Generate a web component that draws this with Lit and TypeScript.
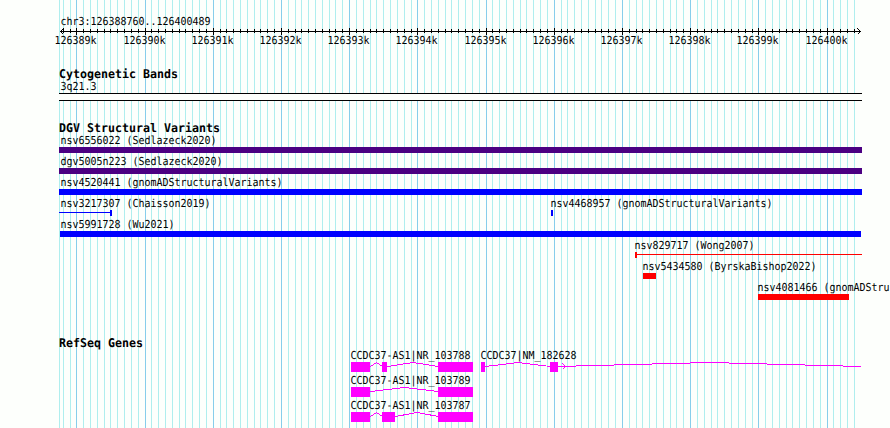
import { LitElement, html, svg, css, nothing } from "lit";
import { customElement } from "lit/decorators.js";
import { map } from "lit/directives/map.js";

type Point = [number, number];

interface Feature {
  label: string;
  x: number;
  color?: string;
  blocks: [number, number][];
  line?: [number, number];
  introns?: [number, number][];
  arrow?: number;
}

const WIDTH = 890;
const LEFT = 59;
const RIGHT = 862;
const FIRST_KB = 126389;
const KB_ORIGIN = 76.82;
const TICK_STEP = 6.82;

const PURPLE = "#4b0082";
const BLUE = "#0000ff";
const RED = "#ff0000";
const MAGENTA = "#ff00ff";

// tick -2 is the first one inside the panel, every tenth is a full kb
const ticks = Array.from({ length: 117 }, (_, i) => {
  const n = i - 2;
  return { x: Math.floor(KB_ORIGIN + n * TICK_STEP), n, major: n % 10 === 0 };
});

const variants: Feature[][] = [
  [{ label: "nsv6556022 (Sedlazeck2020)", x: 60, color: PURPLE, blocks: [[59, 862]] }],
  [{ label: "dgv5005n223 (Sedlazeck2020)", x: 60, color: PURPLE, blocks: [[59, 862]] }],
  [{ label: "nsv4520441 (gnomADStructuralVariants)", x: 60, color: BLUE, blocks: [[59, 862]] }],
  [
    { label: "nsv3217307 (Chaisson2019)", x: 60, color: BLUE, blocks: [[110, 112]], line: [59, 110] },
    { label: "nsv4468957 (gnomADStructuralVariants)", x: 550, color: BLUE, blocks: [[551, 553]] },
  ],
  [{ label: "nsv5991728 (Wu2021)", x: 60, color: BLUE, blocks: [[60, 861]] }],
  [{ label: "nsv829717 (Wong2007)", x: 634, color: RED, blocks: [[635, 637]], line: [637, 862] }],
  [{ label: "nsv5434580 (ByrskaBishop2022)", x: 642, color: RED, blocks: [[643, 656]] }],
  [{ label: "nsv4081466 (gnomADStru", x: 757, color: RED, blocks: [[758, 849]] }],
];

const genes: Feature[][] = [
  [
    {
      label: "CCDC37-AS1|NR_103788",
      x: 350,
      blocks: [[351, 370], [382, 387], [438, 473]],
      introns: [[370, 382], [387, 438]],
    },
    {
      label: "CCDC37|NM_182628",
      x: 480,
      blocks: [[481, 485], [550, 558]],
      introns: [[485, 550], [557, 861]],
      arrow: 565,
    },
  ],
  [
    {
      label: "CCDC37-AS1|NR_103789",
      x: 350,
      blocks: [[351, 370], [438, 473]],
      introns: [[370, 438]],
    },
  ],
  [
    {
      label: "CCDC37-AS1|NR_103787",
      x: 350,
      blocks: [[351, 370], [382, 395], [438, 473]],
      introns: [[370, 382], [395, 438]],
    },
  ],
];

function text(label: string, x: number, y: number, bold = false) {
  const advance = bold ? 7 : 6;
  return svg`<text
    class=${bold ? "title" : "label"}
    x=${x + (bold ? 0 : 0.4)}
    y=${y}
    textLength=${label.length * advance}
    lengthAdjust="spacingAndGlyphs"
  >${label}</text>`;
}

function points(list: Point[]) {
  return list.map(([x, y]) => `${x + 0.5},${y + 0.5}`).join(" ");
}

/**
 * Genome browser panel: ruler, cytogenetic bands, variants and genes.
 */
@customElement("app-root")
export class AppRoot extends LitElement {
  static styles = css`
    :host {
      display: block;
    }

    .panel {
      display: grid;
      width: 890px;
      height: 428px;
      overflow: hidden;
      background: #fdfffc;
    }

    .grid,
    .tracks {
      grid-area: 1 / 1;
    }

    .tracks {
      display: flex;
      flex-direction: column;
    }

    .track {
      margin-bottom: 20px;
    }

    .track.variants {
      margin-bottom: 34px;
    }

    svg {
      display: block;
      shape-rendering: crispEdges;
    }

    .minor {
      fill: #afeeee;
    }

    .major {
      fill: #87ceeb;
    }

    .ink {
      fill: #000;
    }

    .stroke {
      fill: none;
      stroke: #000;
    }

    .band {
      fill: #fdfffc;
    }

    .gene {
      fill: none;
      stroke: #ff00ff;
    }

    .label,
    .title {
      font-family: "DejaVu Sans Mono", "Liberation Mono", monospace;
      font-size: 11px;
      fill: #000;
      white-space: pre;
      text-rendering: geometricPrecision;
    }

    .title {
      font-size: 12px;
      font-weight: bold;
    }
  `;

  render() {
    return html`
      <div class="panel">
        ${this._renderGrid()}
        <div class="tracks">
          ${this._renderRuler()}
          <div class="track">
            ${this._renderTitle("Cytogenetic Bands")} ${this._renderBand()}
          </div>
          <div class="track variants">
            ${this._renderTitle("DGV Structural Variants")}
            ${map(variants, (row) => this._renderRow(row, 21, 6))}
          </div>
          <div class="track">
            ${this._renderTitle("RefSeq Genes")}
            ${map(genes, (row) => this._renderRow(row, 25, 10))}
          </div>
        </div>
      </div>
    `;
  }

  _renderGrid() {
    return html`
      <svg class="grid" width=${WIDTH} height="428">
        <rect class="minor" x=${LEFT} y="0" width="1" height="428"></rect>
        ${map(
          ticks,
          (t) => svg`<rect class=${t.major ? "major" : "minor"} x=${t.x} y="0" width="1" height="428"></rect>`
        )}
      </svg>
    `;
  }

  _renderRuler() {
    return html`
      <svg width=${WIDTH} height="68">
        ${text("chr3:126388760..126400489", 60, 25)}
        <rect class="ink" x="60" y="31" width="801" height="1"></rect>
        <polyline class="stroke" points=${points([[63, 28], [60, 31], [63, 34]])}></polyline>
        <polyline class="stroke" points=${points([[857, 28], [860, 31], [857, 34]])}></polyline>
        ${map(
          ticks,
          (t) => svg`
            <rect class="ink" x=${t.x} y=${t.major ? 28 : 29} width="1" height=${t.major ? 7 : 4}></rect>
            ${t.major ? text(`${FIRST_KB + t.n / 10}k`, t.x - 22, 44) : nothing}
          `
        )}
      </svg>
    `;
  }

  _renderTitle(title: string) {
    return html`<svg width=${WIDTH} height="13">${text(title, LEFT, 10, true)}</svg>`;
  }

  _renderBand() {
    const width = RIGHT - LEFT;
    return html`
      <svg width=${WIDTH} height="21">
        ${text("3q21.3", 60, 9)}
        <rect class="band" x=${LEFT} y="12" width=${width} height="8"></rect>
        <rect class="ink" x=${LEFT} y="12" width=${width} height="1"></rect>
        <rect class="ink" x=${LEFT} y="19" width=${width} height="1"></rect>
      </svg>
    `;
  }

  _renderRow(row: Feature[], height: number, thickness: number) {
    return html`
      <svg width=${WIDTH} height=${height}>
        ${map(row, (feature) => this._renderFeature(feature, thickness))}
      </svg>
    `;
  }

  _renderFeature(f: Feature, thickness: number) {
    const color = f.color ?? MAGENTA;
    return svg`
      ${text(f.label, f.x, 9)}
      ${f.line
        ? svg`<rect fill=${color} x=${f.line[0]} y="14" width=${f.line[1] - f.line[0]} height="1"></rect>`
        : nothing}
      ${map(
        f.introns ?? [],
        ([a, b]) => svg`<polyline class="gene" points=${points([[a, 16], [(a + b) / 2, 12], [b, 16]])}></polyline>`
      )}
      ${map(
        f.blocks,
        ([a, b]) => svg`<rect fill=${color} x=${a} y="12" width=${b - a} height=${thickness}></rect>`
      )}
      ${f.arrow
        ? svg`<polyline class="gene" points=${points([[f.arrow - 3, 13], [f.arrow, 16], [f.arrow - 3, 19]])}></polyline>`
        : nothing}
    `;
  }
}
